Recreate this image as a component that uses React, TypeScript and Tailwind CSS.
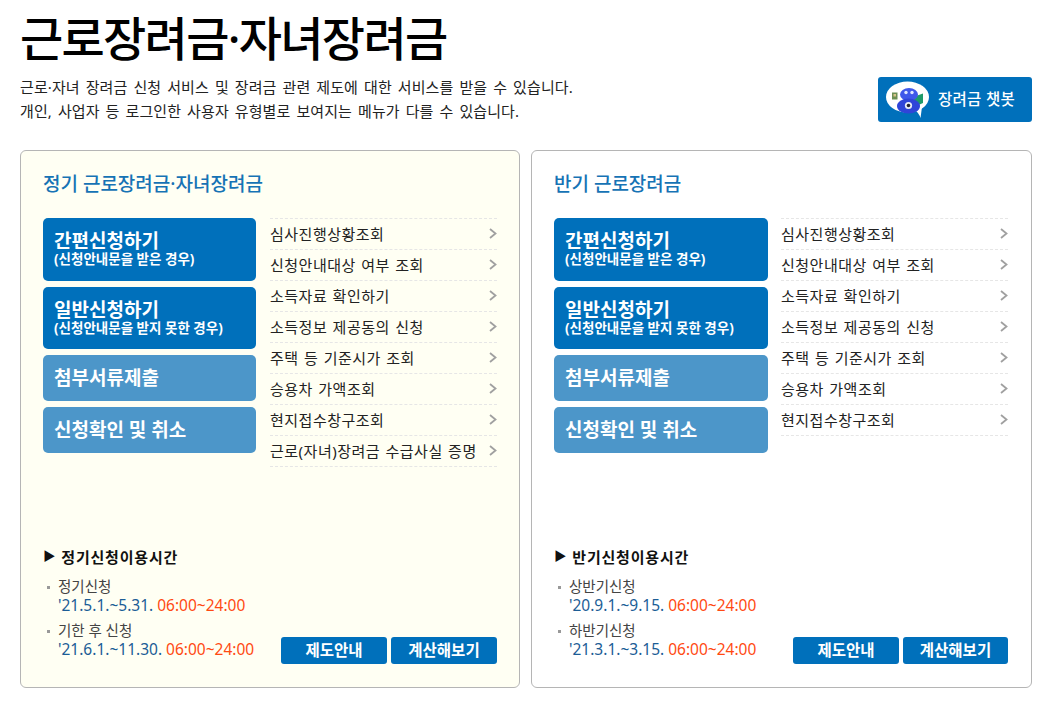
import React from 'react';

const FONT = "font-['Noto_Sans','Noto_Sans_CJK_KR',sans-serif]";

const mainButtons = [
  { title: '간편신청하기', sub: '(신청안내문을 받은 경우)', h: 'h-[63px]', bg: 'bg-[#0070bb]' },
  { title: '일반신청하기', sub: '(신청안내문을 받지 못한 경우)', h: 'h-[62px]', bg: 'bg-[#0070bb]' },
  { title: '첨부서류제출', h: 'h-[46px]', bg: 'bg-[#4c96c9]' },
  { title: '신청확인 및 취소', h: 'h-[46px]', bg: 'bg-[#4c96c9]' },
];

const baseLinks = ['심사진행상황조회', '신청안내대상 여부 조회', '소득자료 확인하기', '소득정보 제공동의 신청', '주택 등 기준시가 조회', '승용차 가액조회', '현지접수창구조회'];

function Arrow() {
  return (
    <svg width="8" height="12" viewBox="0 0 8 12" className="absolute right-0 top-[9px]">
      <path d="M1 1 L6.5 5.5 L1 10" fill="none" stroke="#a0a0a0" strokeWidth="1.8" />
    </svg>
  );
}

function ChatbotLogo() {
  return (
    <svg width="44" height="40" viewBox="0 0 44 40" className="shrink-0">
      <ellipse cx="21.5" cy="17" rx="21.5" ry="15.5" fill="#ffffff" />
      <path d="M28 29 L36 27 L34.5 38 Q33 33 28 29 Z" fill="#ffffff" />
      <rect x="6" y="12.5" width="5.5" height="7" fill="#6d8f55" />
      <rect x="7.5" y="14" width="2.5" height="2.5" fill="#d8c48a" />
      <path d="M27 17 L37 13.5 L37 23 L28 27 Z" fill="#1f9a6a" />
      <ellipse cx="23" cy="14.5" rx="9" ry="6.5" fill="#3f58ea" />
      <ellipse cx="22.5" cy="26" rx="11.5" ry="7.5" fill="#2f45d8" />
      <circle cx="20" cy="12.5" r="1.7" fill="#dfe8ff" />
      <circle cx="26" cy="12.5" r="1.7" fill="#dfe8ff" />
      <circle cx="22.5" cy="25.5" r="3.6" fill="#e8ecf5" />
      <circle cx="22.5" cy="25.5" r="1.8" fill="#223" />
    </svg>
  );
}

function Panel({ title, links, infoTitle, infos, className, btnWidth, actionsWidth }: {
  title: string;
  links: string[];
  infoTitle: string;
  infos: { label: string; date: string }[];
  className: string;
  btnWidth: string;
  actionsWidth: string;
}) {
  return (
    <section className={`h-[538px] rounded-[6px] border border-[#b5b5b5] pl-[22px] pt-[19px] ${className}`}>
      <h2 className="h-[28px] text-[19px] leading-[28px] font-medium text-[#1673b5]">{title}</h2>
      <div className="mt-[20px] flex h-[308px] justify-between">
        <div className={`flex flex-col gap-[6px] ${btnWidth}`}>
          {mainButtons.map((b) => (
            <a key={b.title} className={`flex flex-col justify-center rounded-[5px] pl-[11px] text-white ${b.h} ${b.bg}`}>
              <span className={`text-[19px] leading-[22px] font-bold ${b.sub ? 'mt-[-2px]' : ''}`}>{b.title}</span>
              {b.sub && <span className="text-[13.5px] leading-[15px] font-bold">{b.sub}</span>}
            </a>
          ))}
        </div>
        <ul className="w-[227px] self-start border-t border-dashed border-[#e6e6e6]">
          {links.map((l) => (
            <li key={l} className="relative h-[31px] border-b border-dashed border-[#e6e6e6] text-[15px] leading-[30px] tracking-[0.5px] text-[#222] [word-spacing:1px]">
              {l}
              <Arrow />
            </li>
          ))}
        </ul>
      </div>
      <div className="mt-[21px] flex items-end justify-between">
        <div>
          <h3 className="flex h-[20px] items-center text-[15px] font-bold tracking-[0.8px] text-[#111]">
            <span className="mr-[5px] text-[12.5px]">▶</span>{infoTitle}
          </h3>
          <div className="mt-[10px] flex flex-col gap-[5px]">
            {infos.map((i) => (
              <div key={i.label} className="pl-[4px]">
                <div className="flex h-[20px] items-center text-[14.5px] text-[#444]">
                  <span className="mr-[8px] h-[3px] w-[3px] bg-[#999]" />
                  {i.label}
                </div>
                <div className="h-[19px] pl-[11px] text-[15.5px] leading-[17px] text-[#1c5d96]">
                  {i.date} <span className="text-[#ff4a12]">06:00~24:00</span>
                </div>
              </div>
            ))}
          </div>
        </div>
        <div className={`mb-[-4px] flex gap-[4px] ${actionsWidth}`}>
          <a className="flex h-[27px] w-[106px] items-center justify-center rounded-[3px] bg-[#0070bb] text-[15.5px] font-bold text-white">제도안내</a>
          <a className="flex h-[27px] flex-1 items-center justify-center rounded-[3px] bg-[#0070bb] text-[15.5px] font-bold text-white">계산해보기</a>
        </div>
      </div>
    </section>
  );
}

export default function App() {
  return (
    <div className={`h-[728px] w-[1048px] overflow-hidden bg-white pl-[20px] ${FONT}`}>
      <header className="relative h-[150px] w-[1012px]">
        <h1 className="pt-[2px] text-[47px] leading-[72px] font-medium tracking-[-1.7px] text-black">근로장려금·자녀장려금</h1>
        <p className="mt-[1px] text-[15px] leading-[24px] tracking-[0.1px] text-[#222] [word-spacing:2px]">
          근로·자녀 장려금 신청 서비스 및 장려금 관련 제도에 대한 서비스를 받을 수 있습니다.<br />
          개인, 사업자 등 로그인한 사용자 유형별로 보여지는 메뉴가 다를 수 있습니다.
        </p>
        <a className="absolute right-0 top-[77px] flex h-[45px] w-[154px] items-center gap-[8px] rounded-[3px] bg-[#0070bb] pl-[8px] text-[15.5px] font-medium tracking-[0.3px] text-white">
          <ChatbotLogo />
          장려금 챗봇
        </a>
      </header>
      <div className="flex w-[1012px] gap-[11px]">
        <Panel
          className="w-[500px] bg-[#fffff3] pr-[22px]"
          btnWidth="w-[213px]"
          actionsWidth="w-[216px]"
          title="정기 근로장려금·자녀장려금"
          links={[...baseLinks, '근로(자녀)장려금 수급사실 증명']}
          infoTitle="정기신청이용시간"
          infos={[
            { label: '정기신청', date: "'21.5.1.~5.31." },
            { label: '기한 후 신청', date: "'21.6.1.~11.30." },
          ]}
        />
        <Panel
          className="w-[501px] bg-white pr-[23px]"
          btnWidth="w-[214px]"
          actionsWidth="w-[215px]"
          title="반기 근로장려금"
          links={baseLinks}
          infoTitle="반기신청이용시간"
          infos={[
            { label: '상반기신청', date: "'20.9.1.~9.15." },
            { label: '하반기신청', date: "'21.3.1.~3.15." },
          ]}
        />
      </div>
    </div>
  );
}
